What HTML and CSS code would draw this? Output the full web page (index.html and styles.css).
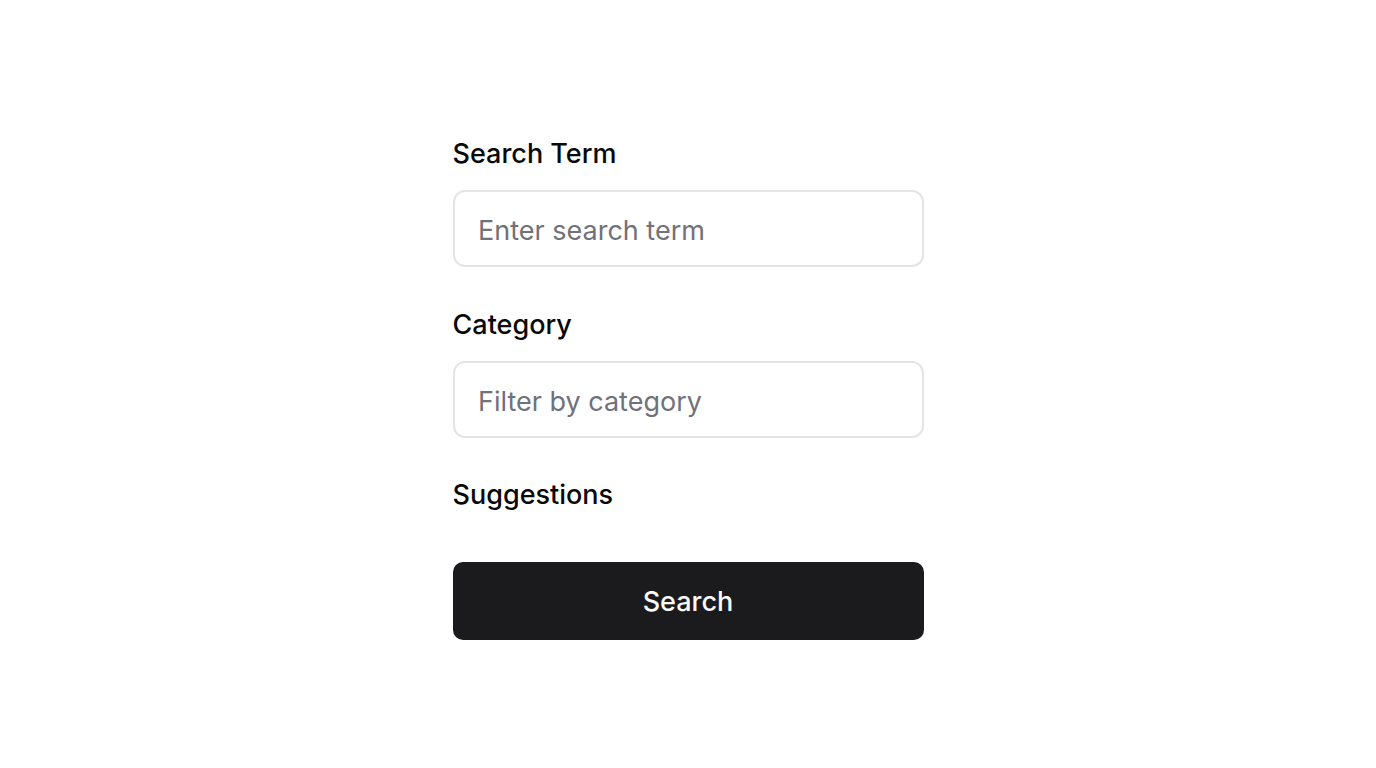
FILE: index.html
```html
<!DOCTYPE html>
<html lang="en">
<head>
<meta charset="utf-8">
<title>Search</title>
<link rel="stylesheet" href="styles.css">
</head>
<body>
<main class="page">
  <form class="search-form">
    <div class="field">
      <label class="label" for="term">Search Term</label>
      <input class="input" id="term" type="text" placeholder="Enter search term">
    </div>
    <div class="field">
      <label class="label" for="cat">Category</label>
      <input class="input" id="cat" type="text" placeholder="Filter by category">
    </div>
    <div class="suggestions">
      <span class="label">Suggestions</span>
    </div>
    <button class="button" type="button">Search</button>
  </form>
</main>
</body>
</html>
```

FILE: styles.css
```css
html, body {
  margin: 0;
  padding: 0;
  background: #ffffff;
}

body {
  font-family: Inter, "Liberation Sans", sans-serif;
  color: #09090b;
}

.page {
  display: flex;
  justify-content: center;
  padding-top: 135px;
}

.search-form {
  width: 471px;
  display: flex;
  flex-direction: column;
}

.field {
  display: flex;
  flex-direction: column;
  margin-bottom: 38.5px;
}

.label {
  display: block;
  padding-top: 1px;
  font-size: 27px;
  line-height: 36px;
  font-weight: 500;
  color: #09090b;
}

.field .label {
  margin-bottom: 18px;
}

.input {
  box-sizing: border-box;
  height: 77px;
  width: 100%;
  border: 2px solid #e4e4e7;
  border-radius: 12px;
  padding: 4px 23.5px 0;
  font-family: inherit;
  font-size: 27px;
  color: #09090b;
  background: #ffffff;
  outline: none;
}

.input::placeholder {
  color: #71717a;
}

.suggestions {
  margin-bottom: 49px;
}

.button {
  box-sizing: border-box;
  height: 78px;
  width: 100%;
  border: none;
  border-radius: 10px;
  background: #1b1b1d;
  color: #fafafa;
  font-family: inherit;
  font-size: 27px;
  font-weight: 500;
  cursor: pointer;
}
```
